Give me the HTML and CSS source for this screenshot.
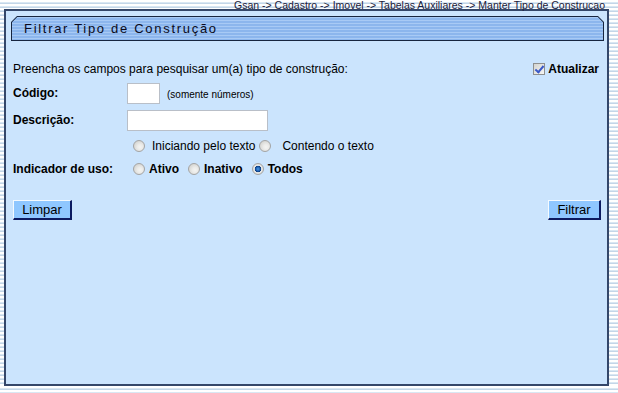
FILE: index.html
```html
<!DOCTYPE html>
<html lang="pt-BR">
<head>
    <meta charset="UTF-8">
    <title>Filtrar Tipo de Construção</title>
    <link rel="stylesheet" href="styles.css">
</head>
<body>
    <div class="breadcrumb">Gsan -&gt; Cadastro -&gt; Imovel -&gt; Tabelas Auxiliares -&gt; Manter Tipo de Construcao</div>

    <div class="panel">
        <div class="titlebar">
            <div class="titlebar-inner">Filtrar Tipo de Construção</div>
        </div>

        <form class="form">
            <div class="row row-intro">
                <span class="intro">Preencha os campos para pesquisar um(a) tipo de construção:</span>
                <label class="update"><input type="checkbox" class="check" checked> Atualizar</label>
            </div>

            <div class="row row-codigo">
                <span class="label">Código:</span>
                <input type="text" class="field field-codigo">
                <span class="hint">(somente números)</span>
            </div>

            <div class="row row-desc">
                <span class="label">Descrição:</span>
                <input type="text" class="field field-desc">
            </div>

            <div class="row row-tipo">
                <span class="label"></span>
                <input type="radio" name="tipo" class="radio">
                <span class="opt opt-first">Iniciando pelo texto</span>
                <input type="radio" name="tipo" class="radio radio-next">
                <span class="opt opt-second">Contendo o texto</span>
            </div>

            <div class="row row-uso">
                <span class="label">Indicador de uso:</span>
                <input type="radio" name="uso" class="radio">
                <span class="opt opt-bold">Ativo</span>
                <input type="radio" name="uso" class="radio radio-uso">
                <span class="opt opt-bold">Inativo</span>
                <input type="radio" name="uso" class="radio radio-uso" checked>
                <span class="opt opt-bold">Todos</span>
            </div>

            <div class="actions">
                <button type="button" class="btn btn-limpar">Limpar</button>
                <button type="button" class="btn btn-filtrar">Filtrar</button>
            </div>
        </form>
    </div>
</body>
</html>
```

FILE: styles.css
```css
body {
    margin: 0;
    font-family: "Liberation Sans", Arial, sans-serif;
    font-size: 12px;
    color: #000000;
    background-color: #ffffff;
    background-image: repeating-linear-gradient(to bottom, #ffffff 0, #ffffff 2px, #d9e7f3 2px, #d9e7f3 3px, #c3d6e8 3px, #c3d6e8 4px);
}
.breadcrumb {
    height: 9px;
    line-height: 11px;
    font-size: 10.5px;
    text-align: right;
    padding-right: 13px;
    color: #1a1a3a;
    white-space: nowrap;
}
.panel {
    box-sizing: border-box;
    width: 605px;
    height: 377px;
    margin-left: 4px;
    border: 2px solid #34476a;
    background-color: #cbe4fd;
}
.titlebar {
    height: 25px;
    margin: 5px 3px 0 5px;
    padding: 1px;
    box-sizing: border-box;
    background-color: #17253f;
    clip-path: polygon(6px 0, calc(100% - 6px) 0, 100% 6px, 100% 100%, 0 100%, 0 6px);
}
.titlebar-inner {
    height: 100%;
    box-sizing: border-box;
    padding-left: 12px;
    line-height: 23px;
    font-size: 13px;
    letter-spacing: 1.7px;
    color: #0a0a20;
    background-color: #92bbef;
    background-image: repeating-linear-gradient(to bottom, #a8caf5 0, #a8caf5 1px, #8cb6ed 1px, #8cb6ed 3px);
    clip-path: polygon(5.5px 0, calc(100% - 5.5px) 0, 100% 5.5px, 100% 100%, 0 100%, 0 5.5px);
}
.form {
    margin: 0;
    padding: 18px 6px 0 7px;
}
.row {
    display: flex;
    align-items: center;
}
.row-intro {
    height: 20px;
}
.row-codigo {
    height: 28px;
}
.row-desc {
    height: 26px;
}
.row-tipo {
    height: 26px;
}
.row-uso {
    height: 20px;
}
.intro {
    flex: 1;
}
.update {
    display: flex;
    align-items: center;
    font-weight: bold;
    margin-right: 2px;
}
.check {
    appearance: none;
    width: 12px;
    height: 12px;
    margin: 0 3px 0 0;
    border: 1px solid #8e8f8f;
    box-sizing: border-box;
    background: linear-gradient(135deg, #d4d4d0, #f6f6f4);
    position: relative;
}
.check:checked::after {
    content: "";
    position: absolute;
    left: 3px;
    top: 0px;
    width: 3px;
    height: 7px;
    border: solid #3a58c8;
    border-width: 0 2px 2px 0;
    transform: rotate(40deg);
}
.label {
    width: 114px;
    flex: none;
    font-weight: bold;
}
.field {
    height: 21px;
    box-sizing: border-box;
    margin: 0;
    border: 1px solid #b9bfc8;
    background-color: #ffffff;
}
.field-codigo {
    width: 33px;
}
.field-desc {
    width: 141px;
}
.hint {
    font-size: 10px;
    margin-left: 7px;
    padding-top: 3px;
}
.radio {
    appearance: none;
    width: 12px;
    height: 12px;
    margin: 0 0 0 6px;
    border: 1px solid #a4a4a4;
    border-radius: 50%;
    box-sizing: border-box;
    background: radial-gradient(circle at 60% 60%, #f4f4f2 0, #ececea 30%, #c9c9c5 100%);
    flex: none;
}
.radio:checked {
    background: radial-gradient(circle at 50% 50%, #4a9ae6 0, #1f5fb0 2px, #0b3c80 3px, #f4f4f2 3.6px, #ececea 45%, #c9c9c5 100%);
}
.radio-next {
    margin-left: 4px;
}
.radio-uso {
    margin-left: 9px;
}
.opt {
    margin-left: 4px;
}
.opt-first {
    margin-left: 7px;
}
.opt-second {
    margin-left: 11px;
}
.opt-bold {
    font-weight: bold;
}
.actions {
    display: flex;
    justify-content: space-between;
    margin-top: 21px;
    margin-right: 0;
}
.btn {
    height: 20px;
    box-sizing: border-box;
    padding: 0 8px;
    font-family: "Liberation Sans", Arial, sans-serif;
    font-size: 13px;
    color: #000000;
    background-color: #8fc7ff;
    border-style: solid;
    border-width: 1px 2px 2px 1px;
    border-color: #f4faff #0c1a60 #0c1a60 #f4faff;
    cursor: pointer;
}
.btn-limpar {
    width: 59px;
}
.btn-filtrar {
    width: 53px;
}
```
